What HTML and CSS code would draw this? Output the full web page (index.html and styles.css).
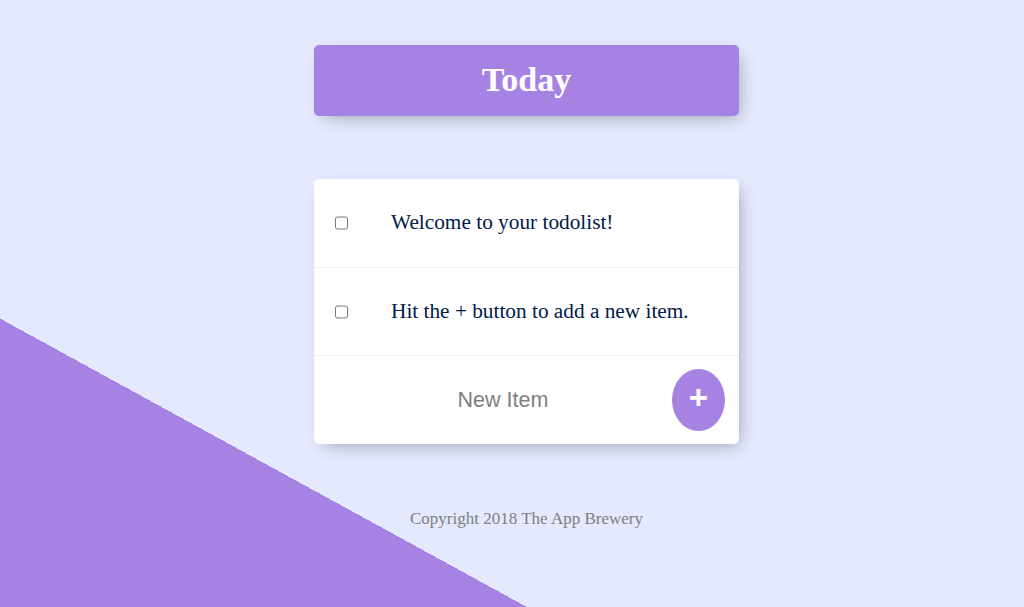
FILE: index.html
```html
<!DOCTYPE html>
<html lang="en">
<head>
<meta charset="utf-8">
<title>To-Do List</title>
<link rel="stylesheet" href="styles.css">
</head>
<body>
  <div class="box heading">
    <h1 class="title">Today</h1>
  </div>

  <div class="box list">
    <div class="item">
      <input class="check" type="checkbox">
      <p class="item-text">Welcome to your todolist!</p>
    </div>
    <div class="item">
      <input class="check" type="checkbox">
      <p class="item-text">Hit the + button to add a new item.</p>
    </div>
    <form class="item new-item" action="#">
      <input class="new-input" type="text" name="newItem" placeholder="New Item" autocomplete="off">
      <button class="add-btn" type="button">+</button>
    </form>
  </div>

  <footer class="footer">Copyright 2018 The App Brewery</footer>
</body>
</html>
```

FILE: styles.css
```css
html {
  height: 100%;
  background-color: #E4E9FD;
  background-image: linear-gradient(28.7deg, #A683E3 253px, #E4E9FD 253px);
  background-repeat: no-repeat;
}

body {
  margin: 0;
  padding: 45px 0 0 29px;
  font-family: "Liberation Serif", "Times New Roman", serif;
}

.box {
  width: 425px;
  margin: 0 auto;
  border-radius: 5px;
  box-shadow: 5px 6px 16px -5px rgba(0, 0, 0, 0.3);
}

.heading {
  height: 71px;
  background-color: #A683E3;
  display: flex;
  align-items: center;
  justify-content: center;
}

.title {
  margin: 0 0 2px;
  color: #fff;
  font-size: 34px;
  font-weight: bold;
  line-height: 1;
}

.list {
  margin-top: 63px;
  background: #fff;
}

.item {
  height: 87px;
  display: flex;
  align-items: center;
  border-bottom: 1px solid #F1F1F1;
}

.item:first-child {
  height: 88px;
}

.item:last-child {
  height: 88px;
  border-bottom: 0;
}

.check {
  margin: 0 0 0 21px;
  width: 13px;
  height: 14px;
  flex: none;
}

.item-text {
  margin: 0;
  padding-left: 43px;
  font-size: 21.3px;
  color: #00204a;
  line-height: 1;
}

.new-item {
  margin: 0;
}

.new-input {
  width: 332px;
  height: 60px;
  margin: 0 0 0 23px;
  padding: 0;
  border: none;
  background: transparent;
  text-align: center;
  font-family: "Liberation Sans", Arial, sans-serif;
  font-size: 21.5px;
  color: #333;
  outline: none;
}

.new-input::placeholder {
  color: grey;
  opacity: 1;
}

.add-btn {
  width: 53px;
  height: 62px;
  margin-left: 3px;
  padding: 0 0 6px;
  border: 0;
  border-radius: 50%;
  background-color: #A683E3;
  color: #fff;
  font-family: "Liberation Sans", Arial, sans-serif;
  font-size: 33px;
  font-weight: bold;
  line-height: 1;
}

.footer {
  margin-top: 65px;
  text-align: center;
  color: grey;
  font-size: 17px;
}
```
